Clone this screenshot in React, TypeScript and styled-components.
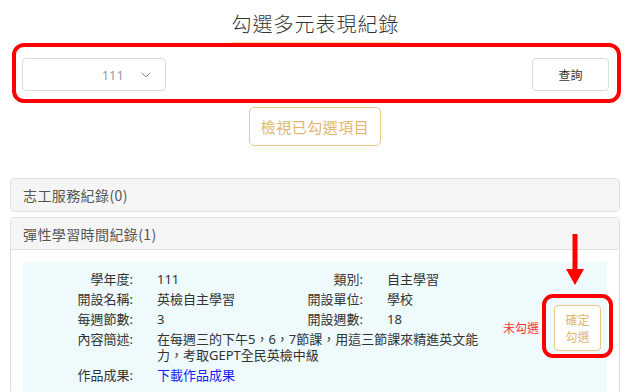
import React from "react";
import styled, { createGlobalStyle } from "styled-components";
import { ChevronDown } from "lucide-react";

const Global = createGlobalStyle`
  html, body { margin: 0; padding: 0; background: #fff; }
  body { font-family: "Noto Sans", "Noto Sans CJK TC", sans-serif; color: #333; }
  * { box-sizing: border-box; }
`;

const Page = styled.div`
  width: 633px;
  padding: 0 13px 0 10px;
  display: flex;
  flex-direction: column;
`;

const TitleWrap = styled.div`
  display: flex;
  justify-content: center;
  padding-top: 10px;
`;

const Title = styled.h1`
  margin: 0;
  font-family: "Noto Sans CJK TC", sans-serif;
  font-weight: 300;
  font-size: 20px;
  line-height: 28px;
  letter-spacing: 1px;
  color: #333;
  padding: 0 0 4px 1px;
  border-bottom: 1px solid #f7dfb6;
`;

const FilterBar = styled.div`
  position: relative;
  margin: 0 -1px 0 2px;
  height: 60px;
  padding: 15px 12px 0 10px;
  display: flex;
  justify-content: space-between;
  align-items: flex-start;
`;

const Highlight = styled.div<{ $radius: number }>`
  position: absolute;
  inset: 0;
  border: 4px solid #ff0000;
  border-radius: ${(p) => p.$radius}px;
  pointer-events: none;
`;

const SelectBox = styled.div`
  width: 144px;
  height: 33px;
  border: 1px solid #dcdcdc;
  border-radius: 4px;
  display: flex;
  align-items: center;
  justify-content: flex-end;
  padding-right: 11px;
  gap: 14px;
  color: #999;
  font-size: 13px;
`;

const QueryButton = styled.button`
  width: 77px;
  height: 33px;
  background: #fff;
  border: 1px solid #dcdcdc;
  border-radius: 4px;
  font-family: "Noto Sans CJK TC", sans-serif;
  font-size: 12px;
  color: #333;
  padding: 0;
`;

const Center = styled.div`
  display: flex;
  justify-content: center;
  margin-top: 4px;
`;

const OutlineGold = styled.button`
  width: 132px;
  height: 39px;
  background: #fff;
  border: 1px solid #ecc887;
  border-radius: 5px;
  color: #e2b66b;
  font-family: "Noto Sans CJK TC", sans-serif;
  font-size: 15px;
  letter-spacing: 0.5px;
  padding: 0;
`;

const Panels = styled.div`
  margin-top: 32px;
  display: flex;
  flex-direction: column;
  gap: 5px;
`;

const Panel = styled.div`
  border: 1px solid #e0e0e0;
  border-radius: 4px;
  background: #fff;
`;

const PanelHeader = styled.div<{ $open?: boolean }>`
  height: 32px;
  background: #f5f5f5;
  border-bottom: ${(p) => (p.$open ? "1px solid #e0e0e0" : "none")};
  border-radius: ${(p) => (p.$open ? "3px 3px 0 0" : "3px")};
  display: flex;
  align-items: center;
  padding-left: 12px;
  font-family: "Noto Sans CJK TC", sans-serif;
  font-size: 14px;
  letter-spacing: 0.4px;
  color: #555;
`;

const PanelBody = styled.div`
  padding: 12px 12px 0 12px;
`;

const Record = styled.div`
  background: #eefafb;
  height: 131px;
  display: flex;
  align-items: center;
  padding-right: 6px;
`;

const Grid = styled.div`
  align-self: flex-start;
  padding-top: 7px;
  flex: 1;
  display: grid;
  grid-template-columns: 110px 110px 72px 100px;
  column-gap: 24px;
  font-family: "Noto Sans", "Noto Sans CJK TC", sans-serif;
  font-size: 13px;
  line-height: 16px;
`;

const Label = styled.div`
  text-align: right;
  padding: 2px 0;
  color: #333;
  white-space: nowrap;
`;

const Value = styled.div<{ $span?: number }>`
  padding: 2px 0;
  color: #333;
  grid-column: ${(p) => (p.$span ? `span ${p.$span}` : "auto")};
`;

const DescLine = styled.span`
  display: block;
  white-space: nowrap;
`;

const Link = styled.a`
  color: #1a1aff;
  text-decoration: none;
`;

const Actions = styled.div`
  display: flex;
  align-items: center;
  gap: 15px;
`;

const Status = styled.span`
  color: #ff3333;
  font-family: "Noto Sans CJK TC", sans-serif;
  font-size: 12px;
`;

const ConfirmWrap = styled.div`
  position: relative;
`;

const ConfirmButton = styled.button`
  width: 47px;
  height: 46px;
  background: #fff;
  border: 1px solid #ecc887;
  border-radius: 4px;
  color: #e2b66b;
  font-family: "Noto Sans CJK TC", sans-serif;
  font-size: 12px;
  line-height: 17px;
  padding: 0;
`;

const ButtonHighlight = styled.div`
  position: absolute;
  top: -11px;
  left: -12px;
  right: -12px;
  bottom: -7px;
  border: 4px solid #ff0000;
  border-radius: 11px;
  pointer-events: none;
`;

const Arrow = styled.svg`
  position: absolute;
  left: 12px;
  top: -71px;
`;

const rows: Array<[string, React.ReactNode, string?, React.ReactNode?]> = [
  ["學年度:", "111", "類別:", "自主學習"],
  ["開設名稱:", "英檢自主學習", "開設單位:", "學校"],
  ["每週節數:", "3", "開設週數:", "18"],
];

export default function App() {
  return (
    <>
      <Global />
      <Page>
        <TitleWrap>
          <Title>勾選多元表現紀錄</Title>
        </TitleWrap>
        <FilterBar>
          <SelectBox>
            <span>111</span>
            <ChevronDown size={16} color="#888" strokeWidth={1.5} />
          </SelectBox>
          <QueryButton>查詢</QueryButton>
          <Highlight $radius={12} />
        </FilterBar>
        <Center>
          <OutlineGold>檢視已勾選項目</OutlineGold>
        </Center>
        <Panels>
          <Panel>
            <PanelHeader>志工服務紀錄(0)</PanelHeader>
          </Panel>
          <Panel>
            <PanelHeader $open>彈性學習時間紀錄(1)</PanelHeader>
            <PanelBody>
              <Record>
                <Grid>
                  {rows.map(([l1, v1, l2, v2]) => (
                    <React.Fragment key={l1}>
                      <Label>{l1}</Label>
                      <Value>{v1}</Value>
                      <Label>{l2}</Label>
                      <Value>{v2}</Value>
                    </React.Fragment>
                  ))}
                  <Label>內容簡述:</Label>
                  <Value $span={3}>
                    <DescLine>在每週三的下午5，6，7節課，用這三節課來精進英文能</DescLine>
                    <DescLine>力，考取GEPT全民英檢中級</DescLine>
                  </Value>
                  <Label>作品成果:</Label>
                  <Value $span={3}>
                    <Link href="#">下載作品成果</Link>
                  </Value>
                </Grid>
                <Actions>
                  <Status>未勾選</Status>
                  <ConfirmWrap>
                    <ConfirmButton>
                      確定
                      <br />
                      勾選
                    </ConfirmButton>
                    <ButtonHighlight />
                    <Arrow width="18" height="52" viewBox="0 0 18 52">
                      <rect x="6.5" y="0" width="5" height="36" fill="#ff0000" />
                      <polygon points="0,35 18,35 9,51" fill="#ff0000" />
                    </Arrow>
                  </ConfirmWrap>
                </Actions>
              </Record>
            </PanelBody>
          </Panel>
        </Panels>
      </Page>
    </>
  );
}
